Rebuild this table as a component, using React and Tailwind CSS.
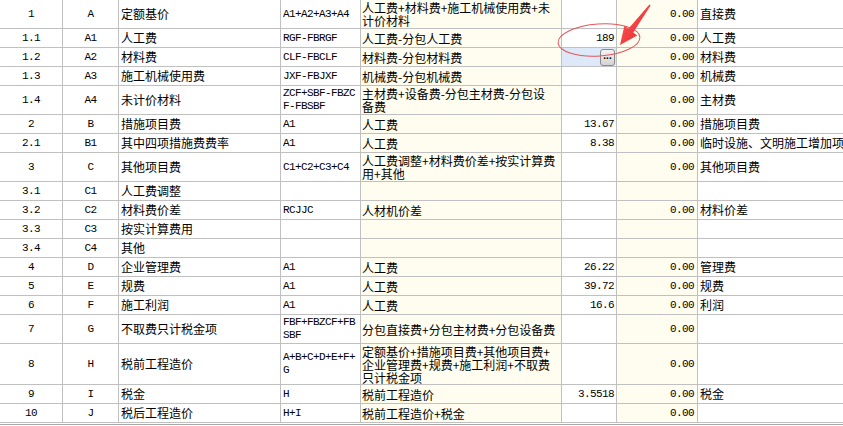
import React from "react";

const rows = [
  { h: "h-[29px]", no: "1", code: "A", name: "定额基价", formula: ["A1+A2+A3+A4"], desc: ["人工费+材料费+施工机械使用费+未", "计价材料"], rate: "", amount: "0.00", note: "直接费" },
  { h: "h-[19px]", no: "1.1", code: "A1", name: "人工费", formula: ["RGF-FBRGF"], desc: ["人工费-分包人工费"], rate: "189", amount: "0.00", note: "人工费" },
  { h: "h-[19px]", no: "1.2", code: "A2", name: "材料费", formula: ["CLF-FBCLF"], desc: ["材料费-分包材料费"], rate: "", amount: "0.00", note: "材料费", editing: true },
  { h: "h-[19px]", no: "1.3", code: "A3", name: "施工机械使用费", formula: ["JXF-FBJXF"], desc: ["机械费-分包机械费"], rate: "", amount: "0.00", note: "机械费" },
  { h: "h-[29px]", no: "1.4", code: "A4", name: "未计价材料", formula: ["ZCF+SBF-FBZC", "F-FBSBF"], desc: ["主材费+设备费-分包主材费-分包设", "备费"], rate: "", amount: "0.00", note: "主材费" },
  { h: "h-[19px]", no: "2", code: "B", name: "措施项目费", formula: ["A1"], desc: ["人工费"], rate: "13.67", amount: "0.00", note: "措施项目费" },
  { h: "h-[19px]", no: "2.1", code: "B1", name: "其中四项措施费费率", formula: ["A1"], desc: ["人工费"], rate: "8.38", amount: "0.00", note: "临时设施、文明施工增加项" },
  { h: "h-[29px]", no: "3", code: "C", name: "其他项目费", formula: ["C1+C2+C3+C4"], desc: ["人工费调整+材料费价差+按实计算费", "用+其他"], rate: "", amount: "0.00", note: "其他项目费" },
  { h: "h-[19px]", no: "3.1", code: "C1", name: "人工费调整", formula: [], desc: [], rate: "", amount: "", note: "" },
  { h: "h-[19px]", no: "3.2", code: "C2", name: "材料费价差", formula: ["RCJJC"], desc: ["人材机价差"], rate: "", amount: "0.00", note: "材料价差" },
  { h: "h-[19px]", no: "3.3", code: "C3", name: "按实计算费用", formula: [], desc: [], rate: "", amount: "", note: "" },
  { h: "h-[19px]", no: "3.4", code: "C4", name: "其他", formula: [], desc: [], rate: "", amount: "", note: "" },
  { h: "h-[19px]", no: "4", code: "D", name: "企业管理费", formula: ["A1"], desc: ["人工费"], rate: "26.22", amount: "0.00", note: "管理费" },
  { h: "h-[19px]", no: "5", code: "E", name: "规费", formula: ["A1"], desc: ["人工费"], rate: "39.72", amount: "0.00", note: "规费" },
  { h: "h-[19px]", no: "6", code: "F", name: "施工利润", formula: ["A1"], desc: ["人工费"], rate: "16.6", amount: "0.00", note: "利润" },
  { h: "h-[29px]", no: "7", code: "G", name: "不取费只计税金项", formula: ["FBF+FBZCF+FB", "SBF"], desc: ["分包直接费+分包主材费+分包设备费"], rate: "", amount: "0.00", note: "" },
  { h: "h-[41px]", no: "8", code: "H", name: "税前工程造价", formula: ["A+B+C+D+E+F+", "G"], desc: ["定额基价+措施项目费+其他项目费+", "企业管理费+规费+施工利润+不取费", "只计税金项"], rate: "", amount: "0.00", note: "" },
  { h: "h-[19px]", no: "9", code: "I", name: "税金", formula: ["H"], desc: ["税前工程造价"], rate: "3.5518", amount: "0.00", note: "税金" },
  { h: "h-[19px]", no: "10", code: "J", name: "税后工程造价", formula: ["H+I"], desc: ["税前工程造价+税金"], rate: "", amount: "0.00", note: "" },
];

const cjk = "font-['Noto_Sans_CJK_SC',sans-serif] text-[12px]";
const mono = "font-['Liberation_Mono',monospace] text-[11px] tracking-[-0.6px]";
const cell = "flex items-center border-r border-b border-[#c0c0c0] overflow-hidden whitespace-nowrap";

const Lines = ({ lines }) => (
  <div className="flex flex-col leading-[13px]">
    {lines.map((l, i) => (
      <span key={i}>{l}</span>
    ))}
  </div>
);

export default function App() {
  return (
    <div className="relative w-[843px] h-[426px] overflow-hidden bg-white text-black">
      <div className="flex flex-col">
        {rows.map((r) => (
          <div
            key={r.no}
            className={`grid grid-cols-[63px_56px_162px_80px_201px_55px_81px_1fr] ${r.h}`}
          >
            <div className={`${cell} ${mono} justify-center`}>{r.no}</div>
            <div className={`${cell} ${mono} justify-center`}>{r.code}</div>
            <div className={`${cell} ${cjk} pl-[2px]`}>{r.name}</div>
            <div className={`${cell} ${mono} pl-[2px]`}>
              <Lines lines={r.formula} />
            </div>
            <div className={`${cell} ${cjk} pl-[1px] bg-[#fffdf0]`}>
              <Lines lines={r.desc} />
            </div>
            {r.editing ? (
              <div className={`${cell} justify-end pr-[1px] bg-[#dde9f8]`}>
                <div className="flex h-[17px] w-[15px] items-center justify-center rounded-[3px] border border-[#8a8a8a] bg-gradient-to-b from-[#f4f4f4] to-[#d4d4d4] font-['Liberation_Sans',sans-serif] text-[10px] font-bold leading-none pb-[3px]">
                  ...
                </div>
              </div>
            ) : (
              <div className={`${cell} ${mono} justify-end pr-[2px]`}>{r.rate}</div>
            )}
            <div className={`${cell} ${mono} justify-end pr-[3px] bg-[#fffdf0]`}>{r.amount}</div>
            <div className={`${cell} ${cjk} pl-[2px] border-r-0`}>{r.note}</div>
          </div>
        ))}
        <div className="h-[2px] border-b border-[#a8a8a8]" />
      </div>

      <svg
        className="absolute inset-0 pointer-events-none"
        width="843"
        height="426"
        viewBox="0 0 843 426"
      >
        <defs>
          <linearGradient id="arrowRed" x1="0" y1="0" x2="1" y2="1">
            <stop offset="0" stopColor="#ff5a5a" />
            <stop offset="1" stopColor="#e8262a" />
          </linearGradient>
        </defs>
        <ellipse
          cx="599"
          cy="40"
          rx="41"
          ry="16"
          fill="none"
          stroke="#e8545a"
          strokeWidth="1"
          transform="rotate(-4 599 40)"
        />
        <polygon
          points="620,45 624.4,25.8 628.4,28.8 649.4,4.6 650.6,5.4 633.2,32.4 637.2,35.4"
          fill="url(#arrowRed)"
        />
      </svg>
    </div>
  );
}
